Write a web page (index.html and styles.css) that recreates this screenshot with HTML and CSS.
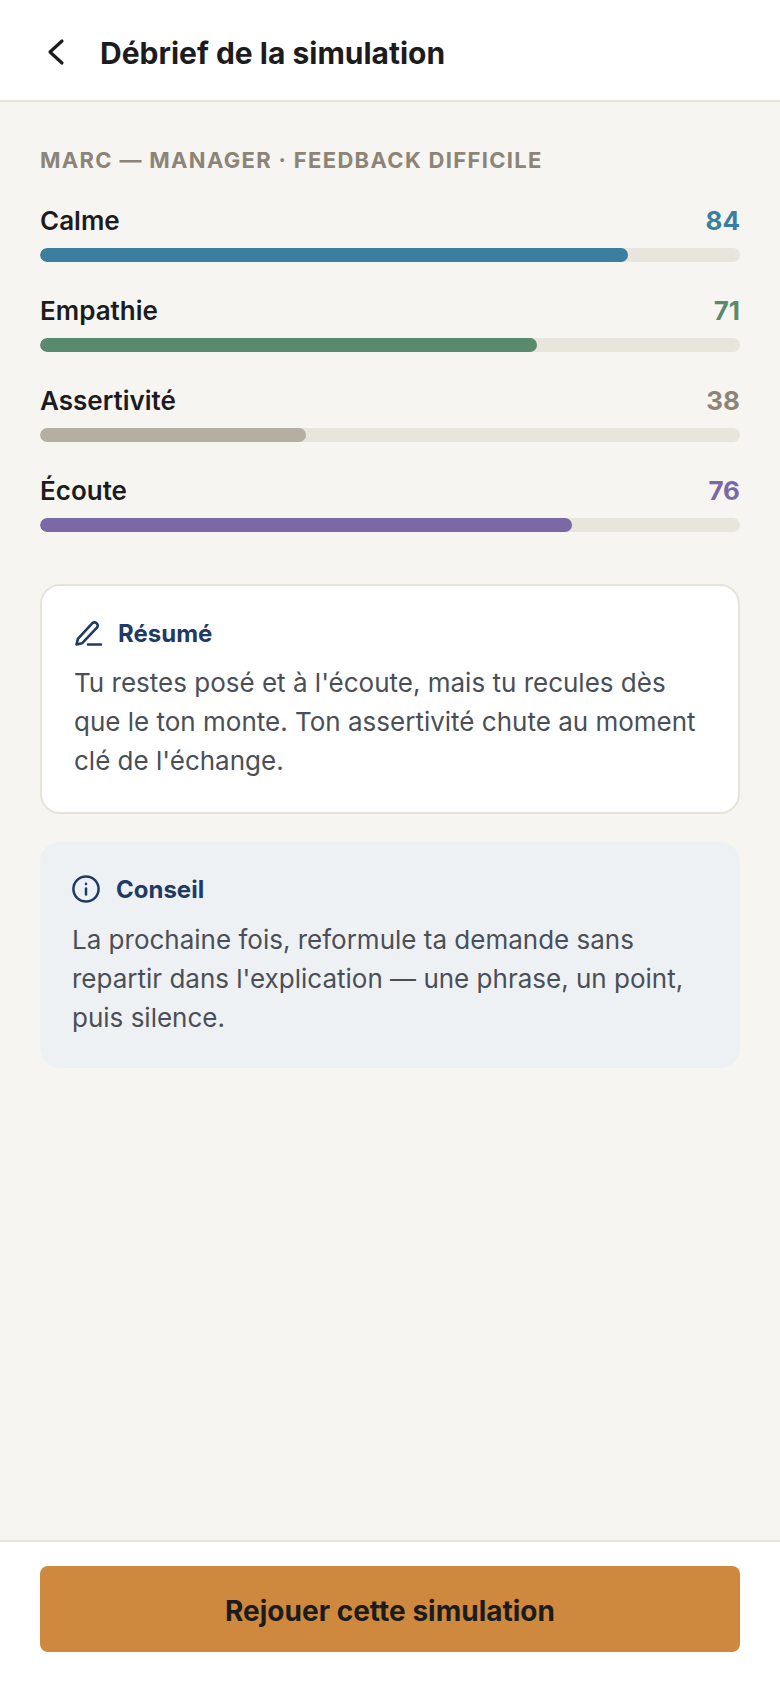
FILE: index.html
```html
<!DOCTYPE html>
<html lang="fr">
<head>
<meta charset="utf-8">
<title>Débrief de la simulation</title>
<link rel="stylesheet" href="styles.css">
</head>
<body>
<div class="screen">
  <header class="topbar">
    <svg class="back" viewBox="0 0 32 32" width="32" height="32" fill="none" stroke="#1c1c1e" stroke-width="3.2" stroke-linecap="round" stroke-linejoin="round"><path d="M22 5L10 16l12 11"/></svg>
    <h1 class="title">Débrief de la simulation</h1>
  </header>
  <main class="content">
    <p class="overline">MARC — MANAGER · FEEDBACK DIFFICILE</p>
    <section class="scores">
      <div class="score">
        <div class="score-head"><span class="score-label">Calme</span><span class="score-val c-blue">84</span></div>
        <div class="track"><div class="fill bg-blue" style="width:84%"></div></div>
      </div>
      <div class="score">
        <div class="score-head"><span class="score-label">Empathie</span><span class="score-val c-green">71</span></div>
        <div class="track"><div class="fill bg-green" style="width:71%"></div></div>
      </div>
      <div class="score">
        <div class="score-head"><span class="score-label">Assertivité</span><span class="score-val c-grey">38</span></div>
        <div class="track"><div class="fill bg-grey" style="width:38%"></div></div>
      </div>
      <div class="score">
        <div class="score-head"><span class="score-label">Écoute</span><span class="score-val c-violet">76</span></div>
        <div class="track"><div class="fill bg-violet" style="width:76%"></div></div>
      </div>
    </section>
    <section class="card card-white">
      <div class="card-head">
        <svg class="icon icon-pen" viewBox="0 0 28 28" width="28" height="28" fill="none" stroke="#1f3a64" stroke-width="2.6" stroke-linecap="round" stroke-linejoin="round"><path d="M2.5 25.5l1.4-5.6L18.4 4.2a2.8 2.8 0 0 1 4 0l.5.5a2.8 2.8 0 0 1 0 4L8 24.3 2.5 25.5z"/><path d="M14 25.5h13"/></svg>
        <span class="card-title">Résumé</span>
      </div>
      <p class="card-text">Tu restes posé et à l'écoute, mais tu recules dès que le ton monte. Ton assertivité chute au moment clé de l'échange.</p>
    </section>
    <section class="card card-blue">
      <div class="card-head">
        <svg class="icon" viewBox="0 0 28 28" width="28" height="28" fill="none" stroke="#1f3a64" stroke-width="2.5" stroke-linecap="round"><circle cx="14" cy="14" r="12.6"/><path d="M14 13.5v6"/><path d="M14 8.8v.1"/></svg>
        <span class="card-title">Conseil</span>
      </div>
      <p class="card-text">La prochaine fois, reformule ta demande sans repartir dans l'explication — une phrase, un point, puis silence.</p>
    </section>
  </main>
  <footer class="bottom">
    <button class="cta">Rejouer cette simulation</button>
  </footer>
</div>
</body>
</html>
```
FILE: styles.css
```css
* { box-sizing: border-box; }
html, body { margin: 0; padding: 0; }
body { font-family: Inter, "Liberation Sans", sans-serif; background: #f6f5f1; color: #1c1c1e; }
.screen { width: 780px; height: 1688px; display: flex; flex-direction: column; }
.topbar { height: 102px; flex: none; background: #fff; border-bottom: 2px solid #e6e3da; display: flex; align-items: center; padding: 4px 40px 0; gap: 28px; }
.back { flex: none; }
.title { margin: 0; padding-top: 2px; font-size: 30px; font-weight: 700; line-height: 1.2; }
.content { flex: 1; padding: 44px 40px 0; }
.overline { margin: 0 0 28px; font-size: 22px; line-height: 28px; font-weight: 700; letter-spacing: 0.06em; color: #8c8577; }
.scores { display: flex; flex-direction: column; gap: 30px; }
.score-head { display: flex; justify-content: space-between; align-items: center; height: 36px; margin-bottom: 10px; }
.score-label { font-size: 26px; font-weight: 600; }
.score-val { font-size: 26px; font-weight: 700; }
.track { height: 14px; border-radius: 7px; background: #e8e5dd; overflow: hidden; }
.fill { height: 100%; border-radius: 7px; }
.bg-blue { background: #3b7fa0; } .c-blue { color: #3b7fa0; }
.bg-green { background: #5a8a6e; } .c-green { color: #5a8a6e; }
.bg-grey { background: #b5afa2; } .c-grey { color: #8c8577; }
.bg-violet { background: #7b68a6; } .c-violet { color: #7b68a6; }
.card { border-radius: 20px; }
.card-white { margin-top: 52px; height: 230px; padding: 31px 32px 0; background: #fff; border: 2px solid #e6e3da; }
.card-blue { margin-top: 28px; height: 226px; padding: 31px 32px 0; background: #eef1f4; }
.card-blue .card-head { margin-bottom: 15px; }
.card-head { display: flex; align-items: center; gap: 16px; height: 32px; margin-bottom: 14px; }
.icon { flex: none; }
.card-title { font-size: 24px; font-weight: 700; color: #1f3a64; }
.card-text { margin: 0; font-size: 26px; line-height: 39px; color: #4a4f57; }
.bottom { flex: none; height: 148px; background: #fff; border-top: 2px solid #e6e3da; padding: 24px 40px 0; }
.cta { display: block; width: 100%; height: 86px; border: 0; border-radius: 8px; padding: 3px 0 0; background: #ce893e; color: #1c1c1e; font: 700 28px Inter, "Liberation Sans", sans-serif; }
```
